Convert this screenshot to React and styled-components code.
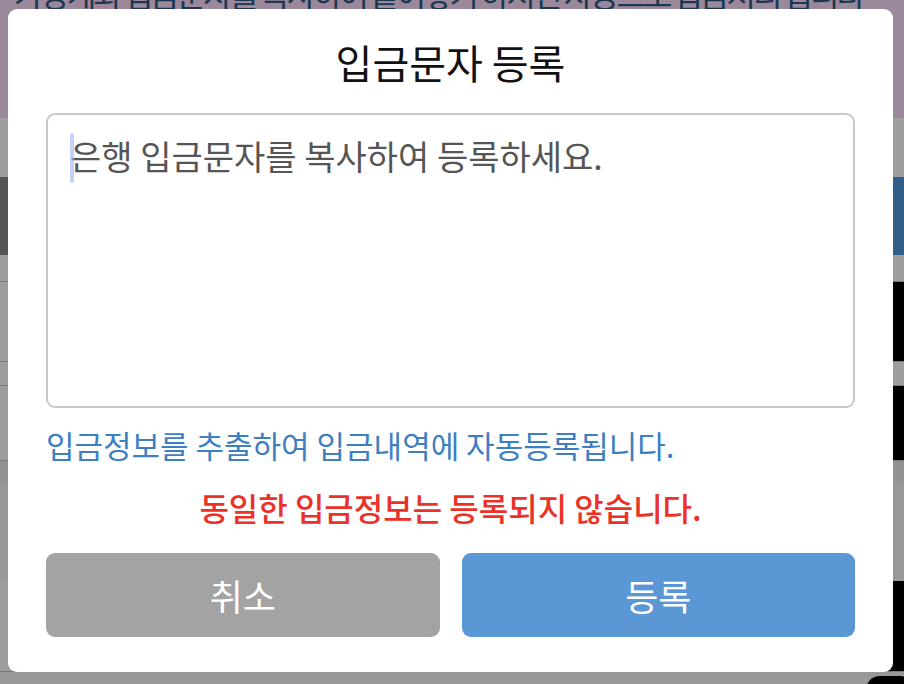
import React from 'react';
import styled, { createGlobalStyle } from 'styled-components';

const GlobalStyle = createGlobalStyle`
  html, body {
    margin: 0;
    padding: 0;
    height: 100%;
  }
  body {
    font-family: "Noto Sans CJK KR", "Noto Sans", sans-serif;
    background: #f7f7f7;
    overflow: hidden;
  }
  #root {
    height: 100%;
  }
`;

// page behind the dialog (mostly hidden by the overlay)
const BackPage = styled.div`
  height: 100vh;
  display: flex;
  flex-direction: column;
  background: #f7f7f7;
`;

const Banner = styled.div`
  flex: none;
  height: 118px;
  padding: 0 14px;
  background: #fadefa;
  overflow: hidden;
`;

const BannerText = styled.p`
  margin: -23px 0 0;
  font-size: 32px;
  line-height: 32px;
  color: #2f5a86;
  white-space: nowrap;
  letter-spacing: -3px;
`;

const Gap = styled.div`
  flex: none;
  height: ${(p) => p.$h}px;
  background: ${(p) => p.$bg || '#ffffff'};
`;

const HeaderRow = styled.div`
  flex: none;
  height: 78px;
  display: flex;
`;

const HeaderCell = styled.div`
  width: ${(p) => (p.$grow ? 'auto' : '120px')};
  flex: ${(p) => (p.$grow ? 1 : 'none')};
  background: ${(p) => p.$bg};
`;

const ListRow = styled.div`
  flex: none;
  height: ${(p) => p.$h}px;
  display: flex;
  justify-content: flex-end;
  align-items: stretch;
  background: #ffffff;
  border-bottom: 1px solid #c4c4c4;
`;

const Thumb = styled.div`
  width: 40px;
  background: #000;
`;

const FloatButton = styled.div`
  position: fixed;
  right: -10px;
  bottom: -30px;
  width: 48px;
  height: 38px;
  border-radius: 14px;
  background: #000;
`;

const Overlay = styled.div`
  position: fixed;
  inset: 0;
  padding: 0 3px 3px 0;
  background: rgba(0, 0, 0, 0.38);
  display: flex;
  align-items: center;
  justify-content: center;
`;

const Modal = styled.div`
  box-sizing: border-box;
  width: 885px;
  height: 663px;
  padding: 29px 38px 34px;
  display: flex;
  flex-direction: column;
  background: #ffffff;
  border-radius: 9px;
`;

const Title = styled.h2`
  margin: 0;
  text-align: center;
  font-size: 40px;
  line-height: 48px;
  font-weight: 400;
  color: #111;
`;

const Field = styled.div`
  position: relative;
  flex: none;
  height: 295px;
  margin-top: 27px;
`;

const TextArea = styled.textarea`
  box-sizing: border-box;
  display: block;
  width: 100%;
  height: 100%;
  padding: 18px 22px;
  border: 2px solid #c9c9c9;
  border-radius: 9px;
  font-family: "Noto Sans CJK KR", "Noto Sans", sans-serif;
  font-size: 34px;
  line-height: 46px;
  color: #333;
  background: #fff;
  resize: none;
  outline: none;
  &::placeholder {
    color: #555;
  }
`;

const Caret = styled.span`
  position: absolute;
  left: 24px;
  top: 20px;
  width: 4px;
  height: 50px;
  border-radius: 2px;
  background: rgba(160, 180, 245, 0.6);
  pointer-events: none;
`;

const Note = styled.p`
  margin: ${(p) => p.$mt}px 0 0;
  text-align: ${(p) => (p.$center ? 'center' : 'left')};
  font-size: ${(p) => p.$size}px;
  line-height: 38px;
  font-weight: ${(p) => p.$weight || 400};
  color: ${(p) => p.$color};
  white-space: nowrap;
`;

const ButtonRow = styled.div`
  display: grid;
  grid-template-columns: 1fr 1fr;
  gap: 22px;
  margin-top: 27px;
`;

const Button = styled.button`
  height: 84px;
  border: none;
  border-radius: 9px;
  background: ${(p) => p.$bg};
  color: #fff;
  font-family: "Noto Sans CJK KR", "Noto Sans", sans-serif;
  font-size: 36px;
  cursor: pointer;
`;

export default function App() {
  return (
    <>
      <GlobalStyle />
      <BackPage>
        <Banner>
          <BannerText>가상계좌 입금문자를 복사하여 붙여넣기 하시면 자동으로 입금처리 됩니다</BannerText>
        </Banner>
        <Gap $h={59} />
        <HeaderRow>
          <HeaderCell $bg="#898989" />
          <HeaderCell $grow $bg="#4c99de" />
        </HeaderRow>
        <ListRow $h={26} />
        <ListRow $h={79}>
          <Thumb />
        </ListRow>
        <ListRow $h={23} />
        <ListRow $h={74}>
          <Thumb />
        </ListRow>
        <Gap $h={22} $bg="#ededed" />
        <Gap $h={98} $bg="#f7f7f7" />
        <ListRow $h={90}>
          <Thumb />
        </ListRow>
        <Gap $h={12} $bg="#f7f7f7" />
        <FloatButton />
      </BackPage>

      <Overlay>
        <Modal>
          <Title>입금문자 등록</Title>
          <Field>
            <TextArea placeholder="은행 입금문자를 복사하여 등록하세요." />
            <Caret />
          </Field>
          <Note $mt={18} $size={31} $color="#3d7fc1">
            입금정보를 추출하여 입금내역에 자동등록됩니다.
          </Note>
          <Note $mt={24} $size={32} $weight={500} $color="#ea3228" $center>
            동일한 입금정보는 등록되지 않습니다.
          </Note>
          <ButtonRow>
            <Button $bg="#a3a3a3">취소</Button>
            <Button $bg="#5a97d4">등록</Button>
          </ButtonRow>
        </Modal>
      </Overlay>
    </>
  );
}
